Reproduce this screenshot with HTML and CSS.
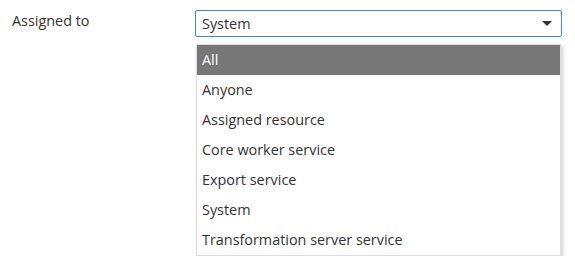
FILE: index.html
```html
<!DOCTYPE html>
<html lang="en">
<head>
    <meta charset="UTF-8">
    <title>Assigned to</title>
    <link rel="stylesheet" href="styles.css">
</head>
<body>
    <div class="field">
        <label class="field-label">Assigned to</label>
        <div class="select">
            <div class="select-box">
                <span class="select-value">System</span>
                <span class="select-arrow"></span>
            </div>
            <ul class="select-menu">
                <li class="active">All</li>
                <li>Anyone</li>
                <li>Assigned resource</li>
                <li>Core worker service</li>
                <li>Export service</li>
                <li>System</li>
                <li>Transformation server service</li>
            </ul>
        </div>
    </div>
</body>
</html>
```

FILE: styles.css
```css
body {
    margin: 0;
    font-family: "Open Sans", "Noto Sans", sans-serif;
    font-size: 14.4px;
    color: #333;
    background: #fff;
}
.field {
    display: flex;
    padding: 10px 0 0 12px;
}
.field-label {
    width: 183px;
    line-height: 21px;
}
.select {
    width: 367px;
}
.select-box {
    display: flex;
    align-items: center;
    height: 25px;
    border: 1px solid #3b8ad8;
    border-radius: 2px;
    padding: 0 9px 0 6px;
}
.select-value {
    flex: 1;
}
.select-arrow {
    width: 0;
    height: 0;
    border-left: 5px solid transparent;
    border-right: 5px solid transparent;
    border-top: 5px solid #333;
}
.select-menu {
    list-style: none;
    margin: 7px 1px 0 1px;
    padding: 0;
    border: 1px solid #ddd;
    box-shadow: 2px 2px 4px rgba(0, 0, 0, 0.18);
}
.select-menu li {
    height: 30px;
    line-height: 29px;
    padding-left: 5px;
}
.select-menu li.active {
    background: #777;
    color: #fff;
}
```
